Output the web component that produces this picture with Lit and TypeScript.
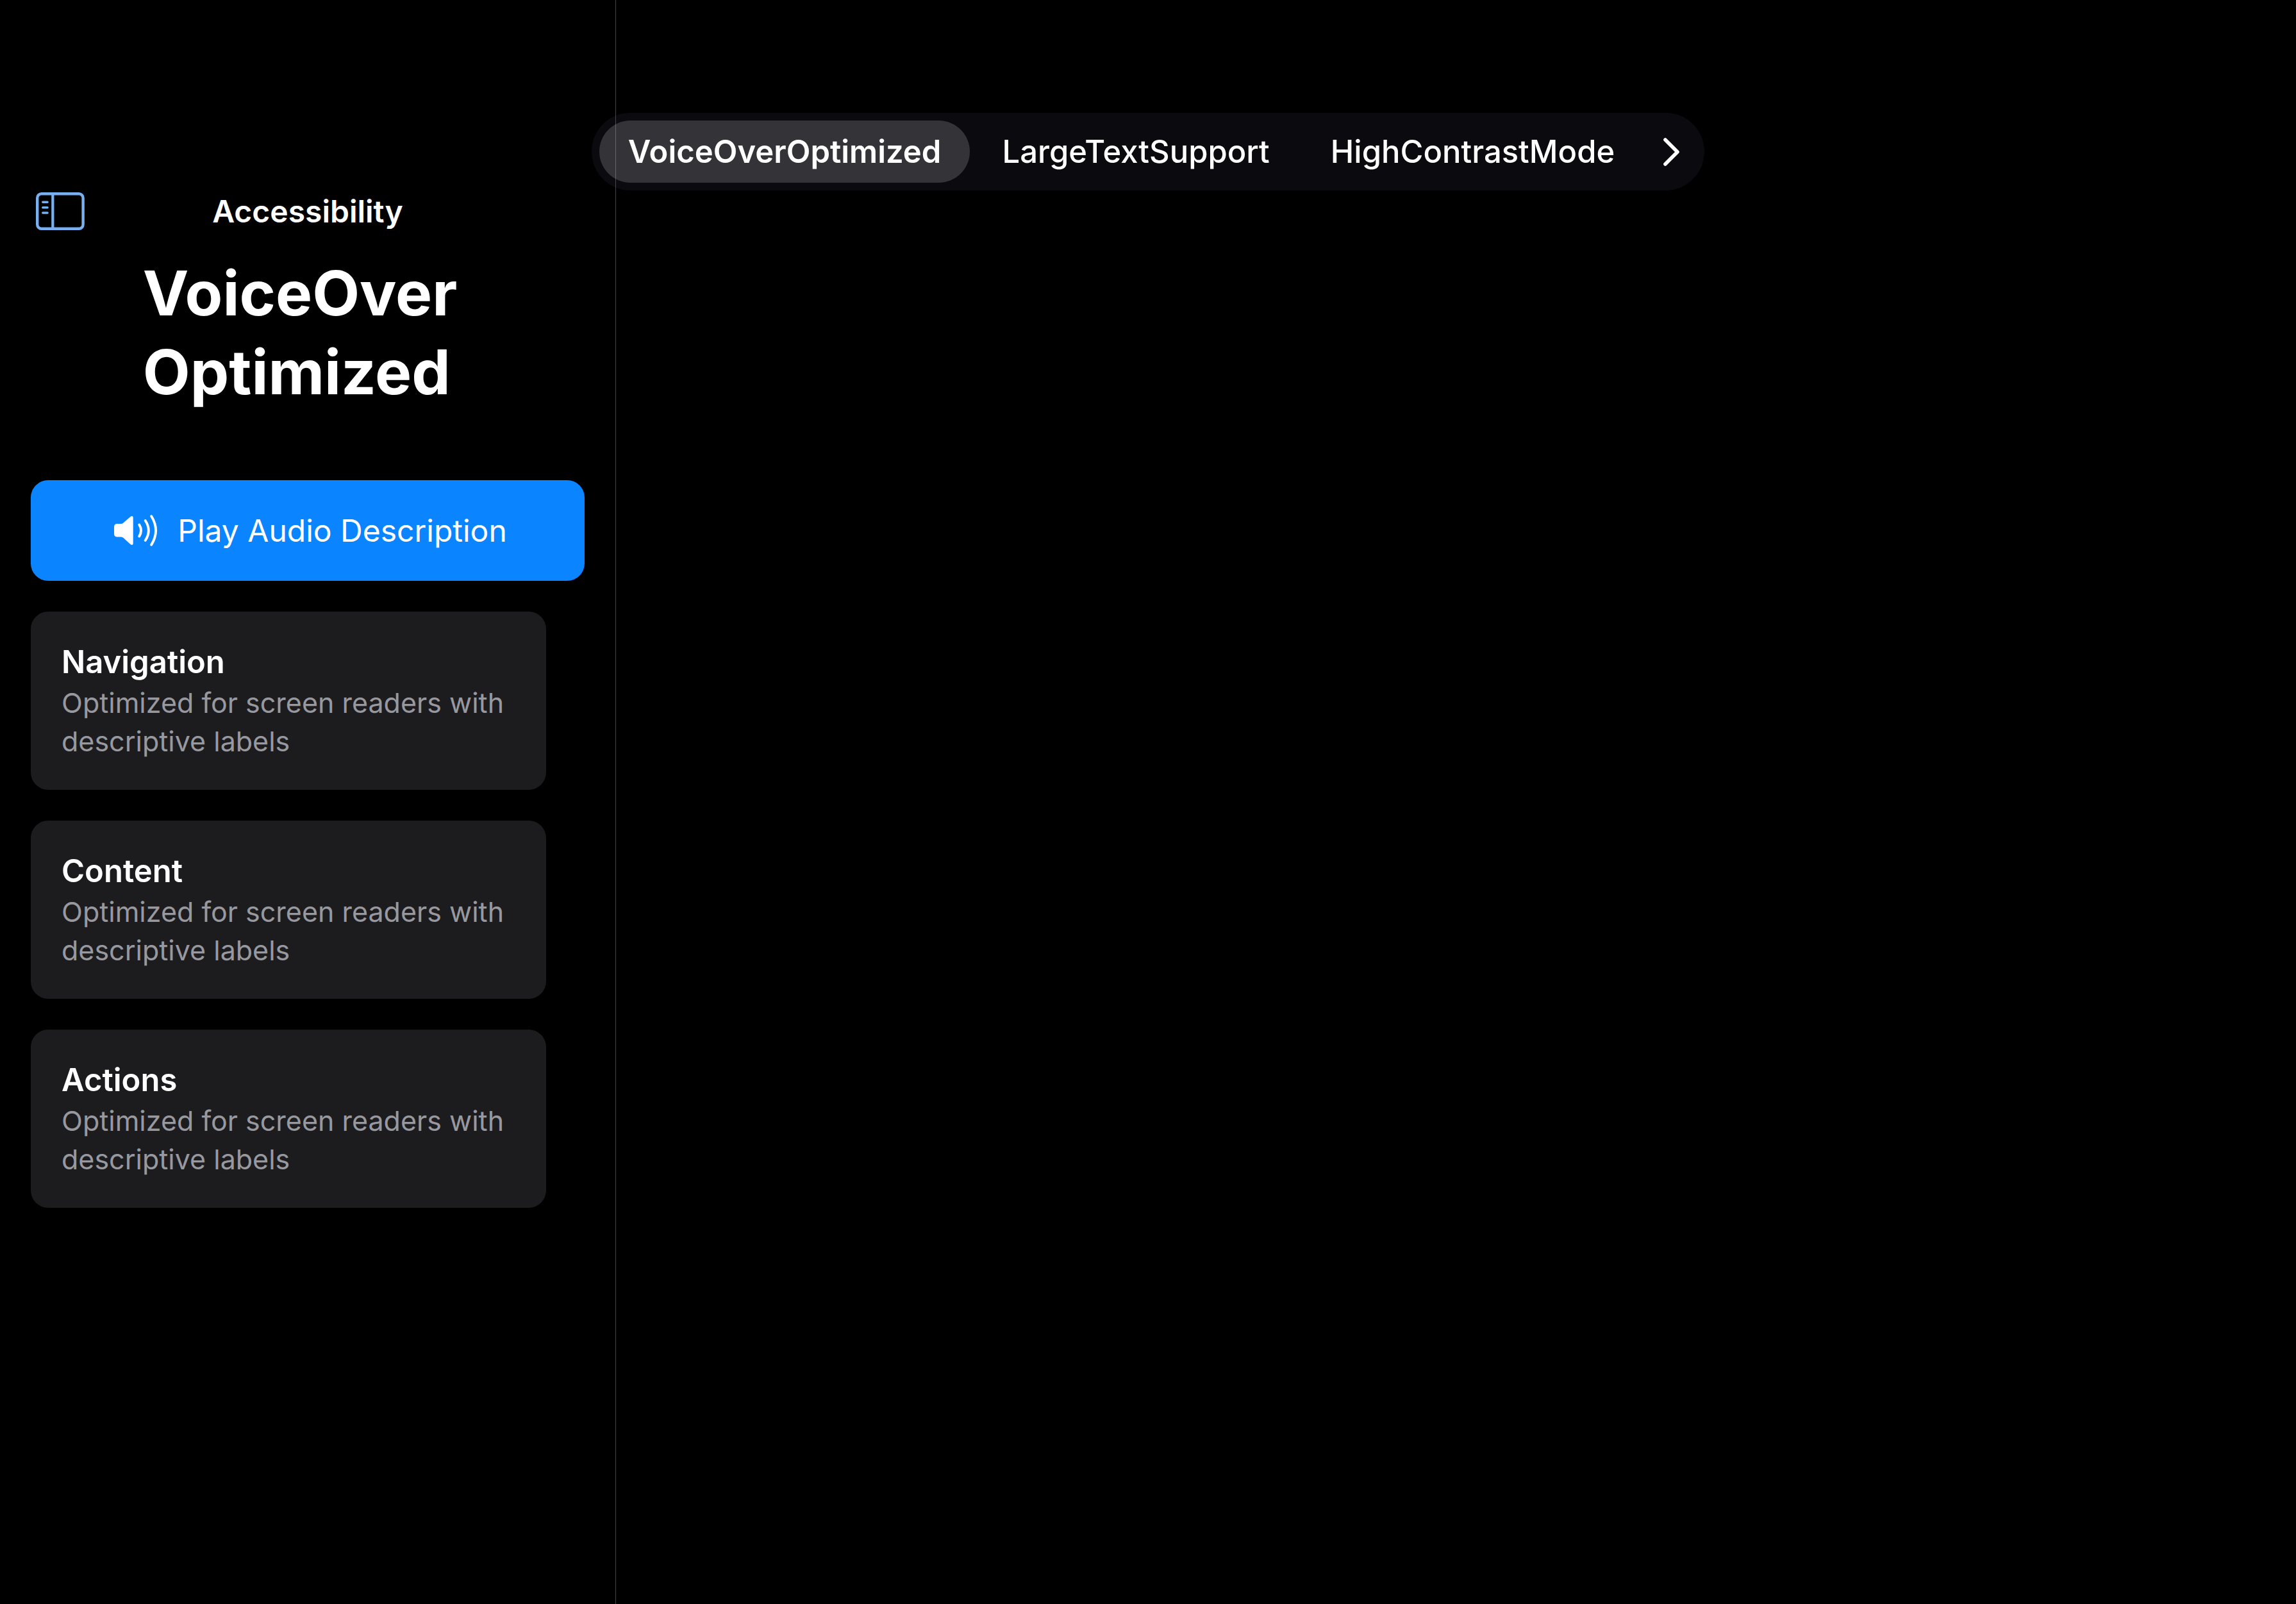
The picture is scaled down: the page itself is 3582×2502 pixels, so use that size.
import { LitElement, html, css } from "lit";
import { customElement, property, state } from "lit/decorators.js";

@customElement("info-card")
class InfoCard extends LitElement {
  @property() heading = "";
  @property() detail = "";

  static styles = css`
    :host {
      display: block;
      padding: 48px 48px 46px;
      border-radius: 27px;
      background: #1c1c1e;
    }
    .heading {
      margin: 0 0 2px;
      font-size: 49px;
      line-height: 62px;
      font-weight: 600;
      color: #fff;
    }
    .detail {
      margin: 0;
      font-size: 43px;
      line-height: 60px;
      font-weight: 400;
      color: #98989f;
    }
  `;

  render() {
    return html`
      <h2 class="heading">${this.heading}</h2>
      <p class="detail">${this.detail}</p>
    `;
  }
}

@customElement("app-root")
class AppRoot extends LitElement {
  @state() private selected = "VoiceOverOptimized";

  private tabs = ["VoiceOverOptimized", "LargeTextSupport", "HighContrastMode"];
  private sections = ["Navigation", "Content", "Actions"];

  static styles = css`
    :host {
      display: block;
      font-family: Inter, "Liberation Sans", sans-serif;
      color: #fff;
    }
    .screen {
      display: grid;
      grid-template-columns: minmax(0, 961px) minmax(0, 1fr);
      grid-template-rows: minmax(100vh, auto);
      background: #000;
    }
    .sidebar {
      grid-area: 1 / 1;
      box-sizing: border-box;
      padding: 288px 48px 48px;
      border-right: 1px solid #444446;
    }
    .content {
      grid-area: 1 / 2;
    }
    .tabs {
      grid-area: 1 / 1 / 2 / 3;
      justify-self: center;
      align-self: start;
      display: flex;
      align-items: center;
      gap: 5px;
      margin-top: 176px;
      padding: 12px;
      border-radius: 61px;
      background: rgba(110, 110, 150, 0.1);
    }
    button {
      margin: 0;
      border: 0;
      background: none;
      color: inherit;
      font: inherit;
      cursor: pointer;
    }
    .tab {
      height: 97px;
      padding: 0 45px;
      border-radius: 49px;
      font-size: 49px;
      line-height: 60px;
      font-weight: 500;
    }
    .tab.on {
      background: rgba(235, 235, 245, 0.18);
      font-weight: 600;
    }
    .more {
      display: flex;
      align-items: center;
      height: 97px;
      padding: 0 25px;
    }
    .toolbar {
      display: grid;
      grid-template-columns: 1fr auto 1fr;
      align-items: center;
      height: 84px;
    }
    .toggle {
      display: flex;
      justify-self: start;
      padding: 0 8px;
      color: #78b0f0;
    }
    .bar-title {
      font-size: 48px;
      line-height: 60px;
      font-weight: 600;
    }
    .title {
      width: min-content;
      margin: 24px auto 107px;
      padding-right: 24px;
      font-size: 96px;
      line-height: 123px;
      font-weight: 700;
    }
    .play {
      display: flex;
      align-items: center;
      justify-content: center;
      gap: 31px;
      width: 100%;
      height: 157px;
      padding: 0 0 0 9px;
      border-radius: 27px;
      background: #0a84ff;
      font-size: 48px;
      line-height: 60px;
    }
    .cards {
      display: grid;
      gap: 48px;
      margin: 48px 60px 0 0;
    }
  `;

  render() {
    return html`
      <div class="screen">
        <aside class="sidebar">
          <header class="toolbar">
            <button class="toggle" aria-label="Toggle sidebar">
              <svg width="76" height="60" viewBox="0 0 76 60" fill="none" stroke="currentColor" stroke-linecap="round">
                <rect x="2.200" y="2.200" width="71.400" height="54.600" rx="6.500" stroke-width="4.400" />
                <path d="M26.300 2V57" stroke-width="4.200" />
                <path d="M10.800 15.300H18M10.800 23.700H18M10.800 32H18" stroke-width="3.600" />
              </svg>
            </button>
            <span class="bar-title">Accessibility</span>
          </header>
          <h1 class="title">VoiceOver Optimized</h1>
          <button class="play">
            <svg width="68" height="50" viewBox="0 0 68 50" fill="none" stroke="#fff" stroke-linecap="round">
              <path d="M0 19Q0 14 5 14H11Q13 14 14.500 12.500L25.500 3Q29.700 0.500 29.700 5V44Q29.700 48.500 25.500 46L14.500 36Q13 34.500 11 34.500H5Q0 34.500 0 29.500Z" fill="#fff" stroke="none" />
              <path d="M39.300 15.500Q44.700 24.500 39.300 33.500M48.700 9Q59 24.500 48.700 40M58.200 2.200Q72 24.500 58.200 46.800" stroke-width="3.900" />
            </svg>
            Play Audio Description
          </button>
          <div class="cards">
            ${this.sections.map(
              (name) => html`<info-card
                .heading=${name}
                .detail=${"Optimized for screen readers with descriptive labels"}
              ></info-card>`
            )}
          </div>
        </aside>
        <main class="content"></main>
        <nav class="tabs">
          ${this.tabs.map(
            (name) => html`<button
              class="tab ${name === this.selected ? "on" : ""}"
              @click=${() => (this.selected = name)}
            >${name}</button>`
          )}
          <button class="more" aria-label="More tabs">
            <svg width="28" height="46" viewBox="0 0 28 46" fill="none" stroke="#fff" stroke-width="5.600" stroke-linecap="round" stroke-linejoin="round">
              <path d="M4 4L23 23L4 42" />
            </svg>
          </button>
        </nav>
      </div>
    `;
  }
}
